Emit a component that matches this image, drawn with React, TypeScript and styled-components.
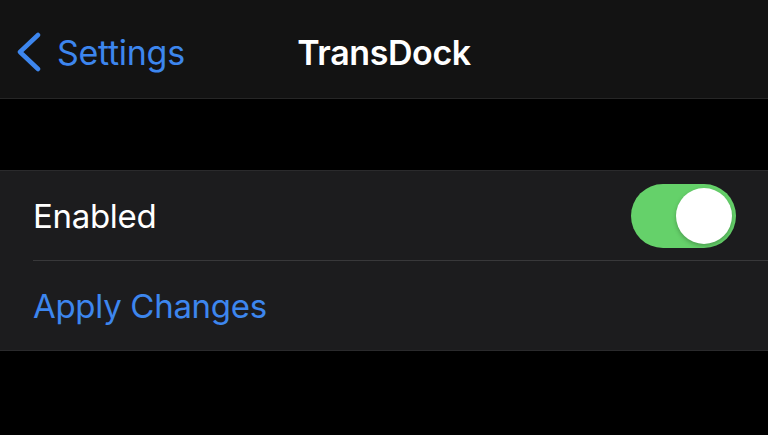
import React from "react";
import styled, { createGlobalStyle } from "styled-components";

const Blue = "#3d86ee";
const Green = "#65d16a";

const GlobalStyle = createGlobalStyle`
  html, body {
    margin: 0;
    padding: 0;
    background: #000;
    font-family: Inter, "Liberation Sans", sans-serif;
    -webkit-font-smoothing: antialiased;
  }
`;

const Page = styled.div`
  width: 768px;
  height: 435px;
  background: #000;
  display: flex;
  flex-direction: column;
  overflow: hidden;
`;

const NavBar = styled.header`
  height: 92px;
  padding: 6px 16px 0;
  background: #131313;
  border-bottom: 1px solid #262626;
  display: grid;
  grid-template-columns: 1fr auto 1fr;
  align-items: center;
  box-sizing: content-box;
  flex-shrink: 0;
`;

const BackButton = styled.button`
  display: flex;
  align-items: center;
  gap: 15px;
  background: none;
  border: none;
  padding: 0;
  color: ${Blue};
  font-family: inherit;
  font-size: 34px;
  letter-spacing: -0.3px;
  cursor: pointer;
  justify-self: start;
`;

const Title = styled.h1`
  margin: 0;
  color: #fff;
  font-size: 34px;
  font-weight: 600;
  letter-spacing: -0.4px;
`;

const Gap = styled.div`
  height: 71px;
  flex-shrink: 0;
`;

const Group = styled.section`
  background: #1c1c1e;
  border-top: 1px solid #2a2a2c;
  border-bottom: 1px solid #2a2a2c;
`;

const Row = styled.div<{ $divider?: boolean }>`
  height: 89px;
  display: flex;
  align-items: center;
  justify-content: space-between;
  margin-left: 33px;
  padding-right: 32px;
  border-bottom: ${(p) => (p.$divider ? "1px solid #38383a" : "none")};
`;

const Label = styled.span<{ $accent?: boolean }>`
  font-size: 33px;
  letter-spacing: -0.3px;
  color: ${(p) => (p.$accent ? Blue : "#fff")};
`;

const Switch = styled.div<{ $on: boolean }>`
  width: 105px;
  height: 64px;
  border-radius: 32px;
  background: ${(p) => (p.$on ? Green : "#39393d")};
  display: flex;
  align-items: center;
  justify-content: ${(p) => (p.$on ? "flex-end" : "flex-start")};
  padding: 0 4px;
  box-sizing: border-box;
`;

const Knob = styled.div`
  width: 56px;
  height: 56px;
  border-radius: 50%;
  background: #fff;
  box-shadow: 0 2px 4px rgba(0, 0, 0, 0.25);
`;

const Chevron = () => (
  <svg width="26" height="40" viewBox="0 0 26 40" fill="none">
    <path
      d="M22 3 L4 20 L22 37"
      stroke={Blue}
      strokeWidth="4.5"
      strokeLinecap="round"
      strokeLinejoin="round"
    />
  </svg>
);

export default function App() {
  return (
    <Page>
      <GlobalStyle />
      <NavBar>
        <BackButton>
          <Chevron />
          Settings
        </BackButton>
        <Title>TransDock</Title>
        <div />
      </NavBar>
      <Gap />
      <Group>
        <Row $divider>
          <Label>Enabled</Label>
          <Switch $on>
            <Knob />
          </Switch>
        </Row>
        <Row>
          <Label $accent>Apply Changes</Label>
        </Row>
      </Group>
    </Page>
  );
}
